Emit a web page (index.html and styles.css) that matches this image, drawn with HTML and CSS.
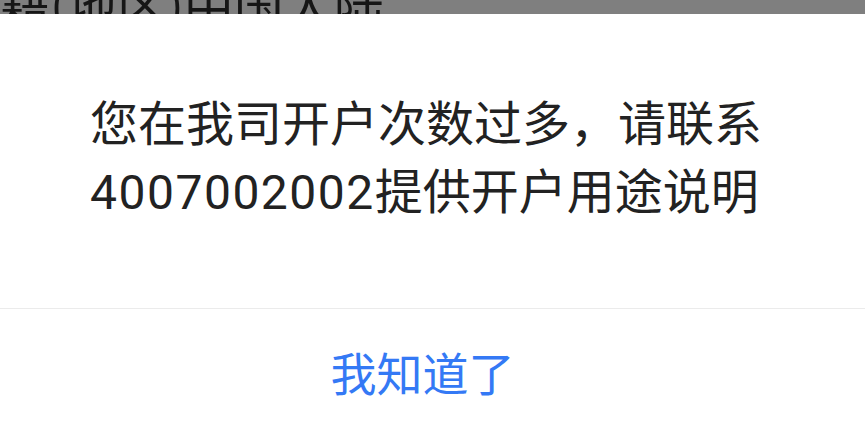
FILE: index.html
```html
<!DOCTYPE html>
<html lang="zh-CN">
<head>
<meta charset="utf-8">
<link rel="stylesheet" href="styles.css">
</head>
<body>
<div class="backdrop">
  <div class="backdrop-text">籍(地区)中国大陆</div>
</div>
<div class="dialog">
  <div class="message">您在我司开户次数过多，请联系<span class="num">4007002002</span>提供开户用途说明</div>
  <div class="actions">
    <button class="ok">我知道了</button>
  </div>
</div>
</body>
</html>
```
FILE: styles.css
```css
html, body {
  margin: 0;
  padding: 0;
}
body {
  width: 865px;
  height: 428px;
  overflow: hidden;
  background: #ffffff;
  font-family: "Noto Sans CJK SC", "Noto Sans", sans-serif;
}
.backdrop {
  height: 14px;
  overflow: hidden;
  background: #7f7f7f;
}
.backdrop-text {
  margin-top: -23px;
  margin-left: 0;
  font-size: 50px;
  line-height: 50px;
  color: #161616;
  white-space: nowrap;
}
.dialog {
  background: #ffffff;
  display: flex;
  flex-direction: column;
}
.message {
  padding: 72px 90px 0 90px;
  height: 294px;
  box-sizing: border-box;
  font-size: 48px;
  line-height: 68px;
  color: #222222;
  text-align: left;
}
.num {
  font-family: Roboto, "Noto Sans CJK SC", sans-serif;
  letter-spacing: 1.5px;
}
.actions {
  border-top: 1px solid #ebebeb;
  height: 120px;
  box-sizing: border-box;
  display: flex;
  align-items: center;
  justify-content: center;
  padding-right: 20px;
}
.ok {
  border: none;
  background: none;
  padding: 0;
  font-family: inherit;
  font-size: 46px;
  line-height: 60px;
  color: #3479f5;
  margin-top: 4px;
}
```
